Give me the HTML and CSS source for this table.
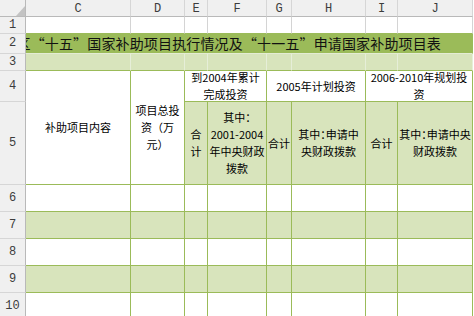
FILE: index.html
```html
<!DOCTYPE html>
<html lang="zh-CN">
<head>
<meta charset="utf-8">
<title>补助项目表</title>
<link rel="stylesheet" href="styles.css">
</head>
<body>
<div class="sheet">
  <div class="hd corner"><svg class="tri" width="9" height="10" viewBox="0 0 9 10"><polygon points="9,0 9,10 0,10" fill="#c3c3c3"/></svg></div>
  <div class="hd col">C</div>
  <div class="hd col">D</div>
  <div class="hd col">E</div>
  <div class="hd col">F</div>
  <div class="hd col">G</div>
  <div class="hd col">H</div>
  <div class="hd col">I</div>
  <div class="hd col">J</div>

  <div class="hd rowh">1</div>
  <div class="c r1"></div><div class="c r1"></div><div class="c r1"></div><div class="c r1"></div>
  <div class="c r1"></div><div class="c r1"></div><div class="c r1"></div><div class="c r1"></div>

  <div class="hd rowh">2</div>
  <div class="title"><span>区“十五”国家补助项目执行情况及“十一五”申请国家补助项目表</span></div>

  <div class="hd rowh">3</div>
  <div class="c r3"></div><div class="c r3"></div><div class="c r3"></div><div class="c r3"></div>
  <div class="c r3"></div><div class="c r3"></div><div class="c r3"></div><div class="c r3"></div>

  <div class="hd rowh">4</div>
  <div class="c span-r2"><span class="t">补助项目内容</span></div>
  <div class="c span-r2"><span class="t">项目总投<br>资（万<br>元）</span></div>
  <div class="c span-c2"><span class="t">到2004年累计<br>完成投资</span></div>
  <div class="c span-c2"><span class="t">2005年计划投资</span></div>
  <div class="c span-c2"><span class="t">2006-2010年规划投<br>资</span></div>

  <div class="hd rowh">5</div>
  <div class="c fill"><span class="t">合<br>计</span></div>
  <div class="c fill"><span class="t">其中<span class="half">：</span><br>2001-2004<br>年中央财政<br>拨款</span></div>
  <div class="c fill"><span class="t">合计</span></div>
  <div class="c fill"><span class="t">其中<span class="half">：</span>申请中<br>央财政拨款</span></div>
  <div class="c fill"><span class="t">合计</span></div>
  <div class="c fill"><span class="t">其中<span class="half">：</span>申请中央<br>财政拨款</span></div>

  <div class="hd rowh">6</div>
  <div class="c"></div><div class="c"></div><div class="c"></div><div class="c"></div>
  <div class="c"></div><div class="c"></div><div class="c"></div><div class="c"></div>

  <div class="hd rowh">7</div>
  <div class="c fill"></div><div class="c fill"></div><div class="c fill"></div><div class="c fill"></div>
  <div class="c fill"></div><div class="c fill"></div><div class="c fill"></div><div class="c fill"></div>

  <div class="hd rowh">8</div>
  <div class="c"></div><div class="c"></div><div class="c"></div><div class="c"></div>
  <div class="c"></div><div class="c"></div><div class="c"></div><div class="c"></div>

  <div class="hd rowh">9</div>
  <div class="c fill"></div><div class="c fill"></div><div class="c fill"></div><div class="c fill"></div>
  <div class="c fill"></div><div class="c fill"></div><div class="c fill"></div><div class="c fill"></div>

  <div class="hd rowh">10</div>
  <div class="c"></div><div class="c"></div><div class="c"></div><div class="c"></div>
  <div class="c"></div><div class="c"></div><div class="c"></div><div class="c"></div>
</div>
</body>
</html>
```
FILE: styles.css
```css
html, body {
  margin: 0;
  padding: 0;
  background: #ffffff;
  overflow: hidden;
}
body {
  width: 474px;
  height: 316px;
  font-family: "Noto Sans CJK SC", "Noto Sans", sans-serif;
  font-size: 11px;
  line-height: 17px;
  color: #000000;
}
.sheet {
  display: grid;
  grid-template-columns: 26px 105px 54px 23px 59px 25px 74px 32px 75px;
  grid-template-rows: 17px 17px 20px 17px 31px 83px repeat(5, 27px);
}
.sheet > div {
  box-sizing: border-box;
  border-right: 1px solid #9bbb59;
  border-bottom: 1px solid #9bbb59;
  display: flex;
  align-items: center;
  justify-content: center;
  text-align: center;
  min-width: 0;
  min-height: 0;
  background: #ffffff;
}
.t {
  display: block;
  white-space: nowrap;
}
.sheet > .hd {
  background: #f0f0f0;
  border-right-color: #d6d6d6;
  border-bottom-color: #d6d6d6;
  font-family: "Liberation Mono", "DejaVu Sans Mono", monospace;
  font-size: 12px;
  color: #3c3c3c;
}
.sheet > .col {
  border-bottom-color: #b9b9b9;
  padding-top: 2px;
}
.sheet > .rowh {
  border-right-color: #b9b9b9;
}
.sheet > .corner {
  border-right-color: #b9b9b9;
  border-bottom-color: #b9b9b9;
  justify-content: flex-end;
  align-items: flex-end;
}
.tri {
  display: block;
}
.sheet > .r1 {
  border-right-color: #d4d4d4;
}
.sheet > .title {
  grid-column: span 8;
  background: #9bbb59;
  border-right-color: #9bbb59;
  border-bottom-color: #e4ecd4;
  overflow: hidden;
  justify-content: flex-end;
  padding-right: 31px;
  white-space: nowrap;
  font-size: 14px;
  line-height: 19px;
  letter-spacing: 0.15px;
  color: #111111;
}
.sheet > .r3 {
  background: #d8e4bc;
  border-right-color: #e6eed8;
}
.sheet > .fill {
  background: #d8e4bc;
}
.span-r2 {
  grid-row: span 2;
}
.span-c2 {
  grid-column: span 2;
}
.half {
  font-feature-settings: "halt";
}
```
